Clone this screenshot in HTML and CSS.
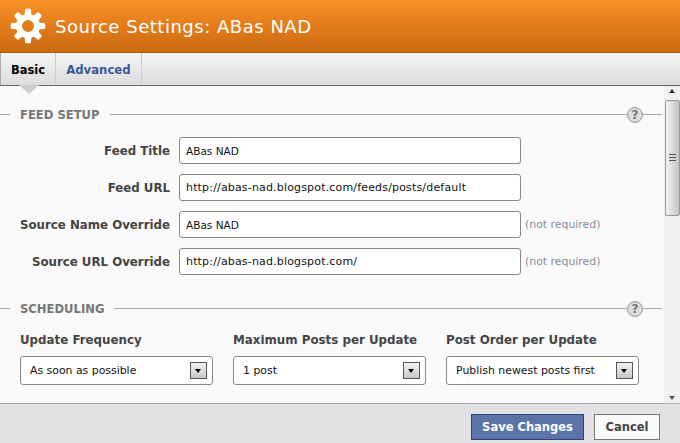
FILE: index.html
```html
<!DOCTYPE html>
<html lang="en">
<head>
<meta charset="utf-8">
<title>Source Settings</title>
<link rel="stylesheet" href="styles.css">
</head>
<body>
<div class="dialog">
  <header class="titlebar">
    <svg class="gear" width="36" height="36" viewBox="-18 -18 36 36" aria-hidden="true">
      <g fill="#fff">
        <path d="M-3.6 -10 L-2.8 -17 Q0 -17.8 2.8 -17 L3.6 -10 Z"/>
        <path d="M-3.6 -10 L-2.8 -17 Q0 -17.8 2.8 -17 L3.6 -10 Z" transform="rotate(45)"/>
        <path d="M-3.6 -10 L-2.8 -17 Q0 -17.8 2.8 -17 L3.6 -10 Z" transform="rotate(90)"/>
        <path d="M-3.6 -10 L-2.8 -17 Q0 -17.8 2.8 -17 L3.6 -10 Z" transform="rotate(135)"/>
        <path d="M-3.6 -10 L-2.8 -17 Q0 -17.8 2.8 -17 L3.6 -10 Z" transform="rotate(180)"/>
        <path d="M-3.6 -10 L-2.8 -17 Q0 -17.8 2.8 -17 L3.6 -10 Z" transform="rotate(225)"/>
        <path d="M-3.6 -10 L-2.8 -17 Q0 -17.8 2.8 -17 L3.6 -10 Z" transform="rotate(270)"/>
        <path d="M-3.6 -10 L-2.8 -17 Q0 -17.8 2.8 -17 L3.6 -10 Z" transform="rotate(315)"/>
      </g>
      <circle r="9" fill="none" stroke="#fff" stroke-width="6"/>
    </svg>
    <h1 class="title">Source Settings: ABas NAD</h1>
  </header>
  <nav class="tabs">
    <div class="tab tab-active">Basic</div>
    <div class="tab tab-link">Advanced</div>
  </nav>
  <div class="body">
    <main class="content">
      <section class="section">
        <div class="heading">
          <span class="heading-text">FEED SETUP</span>
          <span class="rule"></span>
          <span class="help">?</span>
          <span class="rule-end"></span>
        </div>
        <div class="fields">
          <div class="field"><label class="field-label">Feed Title</label><div class="input">ABas NAD</div></div>
          <div class="field"><label class="field-label">Feed URL</label><div class="input input-url">http://abas-nad.blogspot.com/feeds/posts/default</div></div>
          <div class="field"><label class="field-label">Source Name Override</label><div class="input">ABas NAD</div><span class="note">(not required)</span></div>
          <div class="field"><label class="field-label">Source URL Override</label><div class="input input-url">http://abas-nad.blogspot.com/</div><span class="note">(not required)</span></div>
        </div>
      </section>
      <section class="section section-second">
        <div class="heading">
          <span class="heading-text">SCHEDULING</span>
          <span class="rule"></span>
          <span class="help">?</span>
          <span class="rule-end"></span>
        </div>
        <div class="columns">
          <div class="column">
            <label class="column-label">Update Frequency</label>
            <div class="select"><span>As soon as possible</span><span class="arrow"></span></div>
          </div>
          <div class="column">
            <label class="column-label">Maximum Posts per Update</label>
            <div class="select"><span>1 post</span><span class="arrow"></span></div>
          </div>
          <div class="column">
            <label class="column-label">Post Order per Update</label>
            <div class="select"><span>Publish newest posts first</span><span class="arrow"></span></div>
          </div>
        </div>
      </section>
    </main>
    <div class="scrollbar">
      <span class="sb-up"></span>
      <div class="sb-thumb"><span class="sb-grip"></span></div>
      <span class="sb-down"></span>
    </div>
  </div>
  <footer class="footer">
    <button class="btn btn-primary" type="button">Save Changes</button>
    <button class="btn" type="button">Cancel</button>
  </footer>
</div>
</body>
</html>
```

FILE: styles.css
```css
* { box-sizing: border-box; }
html, body { margin: 0; padding: 0; }
body {
  width: 680px;
  height: 443px;
  overflow: hidden;
  font-family: "DejaVu Sans", sans-serif;
  font-size: 11px;
  color: #333;
}
.dialog { display: flex; flex-direction: column; height: 443px; background: #fafafa; }

.titlebar {
  height: 53px;
  flex: none;
  display: flex;
  align-items: center;
  padding-left: 10px;
  background: linear-gradient(#f98f27, #cb6a10);
  border-bottom: 1px solid #a3591a;
}
.gear { flex: none; margin-top: -1px; }
.title {
  margin: 0 0 0 9px;
  font-size: 18px;
  font-weight: normal;
  color: #fff;
  letter-spacing: 0.52px;
}

.tabs {
  height: 33px;
  flex: none;
  display: flex;
  position: relative;
  background: linear-gradient(#f4f4f4, #dcdcdc);
  border-bottom: 1px solid #666;
}
.tab {
  display: flex;
  align-items: center;
  padding: 1px 10px 0 11px;
  font-size: 11.5px;
  font-weight: bold;
  color: #3b5998;
  border-right: 1px solid #ccc;
}
.tab-link { font-size: 11.7px; padding-left: 10px; }
.tab-active { color: #000; border-left: 1px solid #aaa; padding-left: 10px; position: relative; }
.tab-active::after {
  content: "";
  position: absolute;
  left: 18px;
  top: 32px;
  width: 0;
  height: 0;
  border-left: 10px solid transparent;
  border-right: 10px solid transparent;
  border-top: 9px solid #ccc;
}

.body { flex: 1; min-height: 0; display: flex; border-bottom: 1px solid #aaa; }
.content { flex: 1; min-width: 0; overflow: hidden; padding-top: 20px; }

.heading { display: flex; align-items: center; height: 17px; padding-left: 10px; position: relative; }
.heading::before { content: ""; position: absolute; left: 0; top: 8px; width: 10px; height: 1px; background: #aaa; }
.heading-text { padding: 0 10px; font-size: 11.6px; font-weight: bold; color: #777; white-space: nowrap; }
.rule { flex: 1; height: 1px; background: #aaa; }
.rule-end { width: 19px; height: 1px; background: #aaa; flex: none; margin-right: 2px; }
.help {
  flex: none;
  width: 16px;
  height: 16px;
  border: 1px solid #999;
  border-radius: 50%;
  background: #ddd;
  color: #777;
  font-size: 12px;
  font-weight: bold;
  line-height: 14px;
  text-align: center;
}

.fields { display: flex; flex-direction: column; gap: 10px; padding-top: 14px; }
.field { display: flex; align-items: center; height: 27px; }
.field-label { width: 170px; flex: none; text-align: right; font-weight: bold; font-size: 11.8px; color: #444; }
.input {
  width: 342px;
  height: 27px;
  margin-left: 9px;
  flex: none;
  display: flex;
  align-items: center;
  padding-left: 6px;
  background: #fff;
  border: 1px solid #888;
  border-radius: 3px;
  color: #111;
  font-size: 10.5px;
  white-space: nowrap;
}
.input-url { font-size: 11px; letter-spacing: 0.17px; }
.note { margin-left: 4px; color: #8a8a9a; font-size: 10.9px; }

.section-second { margin-top: 25px; }
.columns { display: flex; gap: 20px; padding: 16px 0 0 20px; }
.column { width: 193px; flex: none; display: flex; flex-direction: column; gap: 8px; }
.column-label { font-weight: bold; font-size: 11.85px; color: #444; white-space: nowrap; line-height: 15px; }
.select {
  height: 29px;
  display: flex;
  align-items: center;
  justify-content: space-between;
  padding: 0 5px 0 9px;
  background: #fff;
  border: 1px solid #888;
  border-radius: 3px;
  color: #111;
  font-size: 10.9px;
  white-space: nowrap;
}
.arrow {
  width: 17px;
  height: 17px;
  flex: none;
  position: relative;
  background: linear-gradient(#f2f2f2, #c8c8c8);
  border: 1px solid #555;
}
.arrow::after {
  content: "";
  position: absolute;
  left: 4px;
  top: 6px;
  border-left: 3.5px solid transparent;
  border-right: 3.5px solid transparent;
  border-top: 4px solid #000;
}

.scrollbar {
  width: 16px;
  flex: none;
  display: flex;
  flex-direction: column;
  align-items: center;
  background: #f0f0f0;
  position: relative;
}
.sb-up {
  margin-top: 3px;
  border-left: 3.5px solid transparent;
  border-right: 3.5px solid transparent;
  border-bottom: 4px solid #333;
}
.sb-thumb {
  width: 15px;
  height: 116px;
  margin-top: 7px;
  display: flex;
  align-items: center;
  justify-content: center;
  background: linear-gradient(90deg, #f2f2f2, #c4c4c4);
  border: 1px solid #999;
  border-radius: 2px;
}
.sb-grip { width: 7px; height: 8px; background: repeating-linear-gradient(#555 0 1px, transparent 1px 3px); }
.sb-down {
  position: absolute;
  bottom: 3px;
  border-left: 3.5px solid transparent;
  border-right: 3.5px solid transparent;
  border-top: 4px solid #555;
}

.footer {
  height: 39px;
  flex: none;
  display: flex;
  justify-content: flex-end;
  align-items: flex-start;
  gap: 10px;
  padding: 10px 20px 0 0;
  background: #e2e2e2;
}
.btn {
  height: 26px;
  width: 66px;
  padding: 0;
  font-family: inherit;
  font-size: 11.5px;
  font-weight: bold;
  color: #444;
  background: #fafafa;
  border: 1px solid #777;
  border-radius: 0;
}
.btn-primary { width: 113px; background: #5b74a8; border-color: #29447e; color: #fff; }
```
